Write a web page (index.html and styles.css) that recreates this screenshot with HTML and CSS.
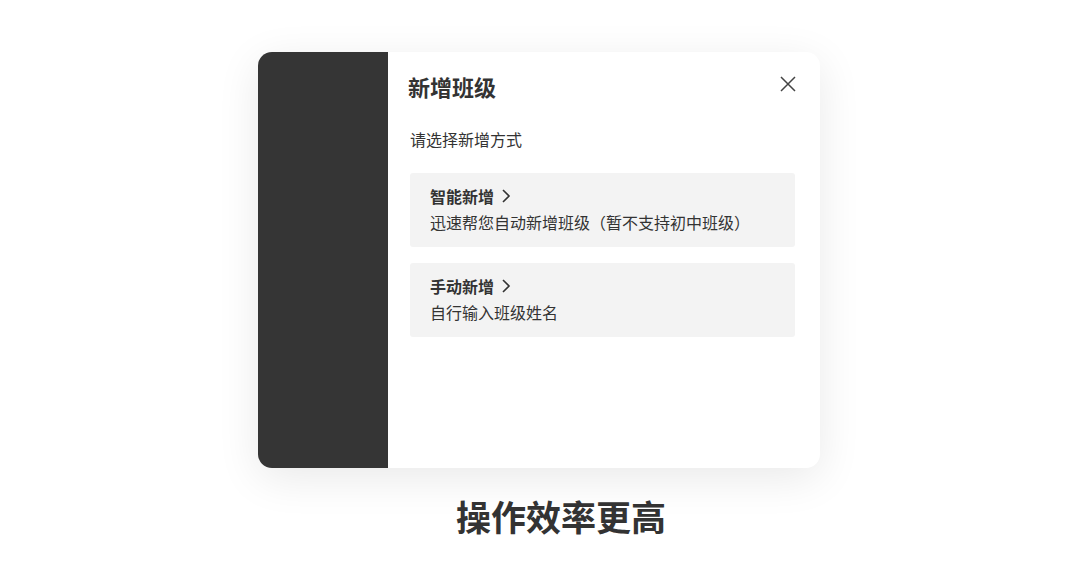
FILE: index.html
```html
<!DOCTYPE html>
<html lang="zh-CN">
<head>
  <meta charset="UTF-8">
  <title>新增班级</title>
  <link rel="stylesheet" href="styles.css">
</head>
<body>
  <div class="stage">
    <div class="dialog">
      <div class="side"></div>
      <div class="main">
        <div class="header">
          <h1>新增班级</h1>
          <svg class="close" width="16" height="16" viewBox="0 0 16 16">
            <path d="M1 1L15 15M15 1L1 15" stroke="#444" stroke-width="1.5" fill="none"/>
          </svg>
        </div>
        <p class="hint">请选择新增方式</p>
        <div class="option">
          <div class="opt-title">智能新增
            <svg class="chev" width="10" height="16" viewBox="0 0 10 16">
              <path d="M2 2L8 8L2 14" stroke="#333" stroke-width="1.6" fill="none"/>
            </svg>
          </div>
          <div class="opt-desc">迅速帮您自动新增班级（暂不支持初中班级）</div>
        </div>
        <div class="option">
          <div class="opt-title">手动新增
            <svg class="chev" width="10" height="16" viewBox="0 0 10 16">
              <path d="M2 2L8 8L2 14" stroke="#333" stroke-width="1.6" fill="none"/>
            </svg>
          </div>
          <div class="opt-desc">自行输入班级姓名</div>
        </div>
      </div>
    </div>
    <div class="caption">操作效率更高</div>
  </div>
</body>
</html>
```

FILE: styles.css
```css
body {
  margin: 0;
  background: #fff;
  color: #333;
  font-family: "Noto Sans CJK SC", "Noto Sans", sans-serif;
}
.stage {
  padding: 52px 0 0 258px;
}
.dialog {
  width: 562px;
  height: 416px;
  display: flex;
  border-radius: 14px;
  overflow: hidden;
  background: #fff;
  box-shadow: 0 10px 44px rgba(0, 0, 0, 0.09);
}
.side {
  width: 130px;
  background: #353535;
}
.main {
  flex: 1;
  padding: 19px 25px 0 22px;
}
.header {
  display: flex;
  justify-content: space-between;
  align-items: center;
  margin: 0 -1px 0 -2px;
}
h1 {
  margin: 0;
  font-size: 22px;
  line-height: 30px;
  font-weight: bold;
  color: #333;
}
.close {
  margin-top: -4px;
}
.hint {
  margin: 26px 0 22px;
  font-size: 16px;
  line-height: 24px;
}
.option {
  background: #f3f3f3;
  border-radius: 3px;
  padding: 10px 20px 12px;
  margin-bottom: 16px;
}
.opt-title {
  font-size: 16px;
  line-height: 26px;
  font-weight: bold;
  display: flex;
  align-items: center;
  gap: 7px;
}
.opt-desc {
  font-size: 16px;
  line-height: 26px;
}
.caption {
  width: 562px;
  padding-left: 44px;
  box-sizing: border-box;
  text-align: center;
  margin-top: 24px;
  font-size: 35px;
  line-height: 48px;
  font-weight: bold;
  color: #333;
}
```
